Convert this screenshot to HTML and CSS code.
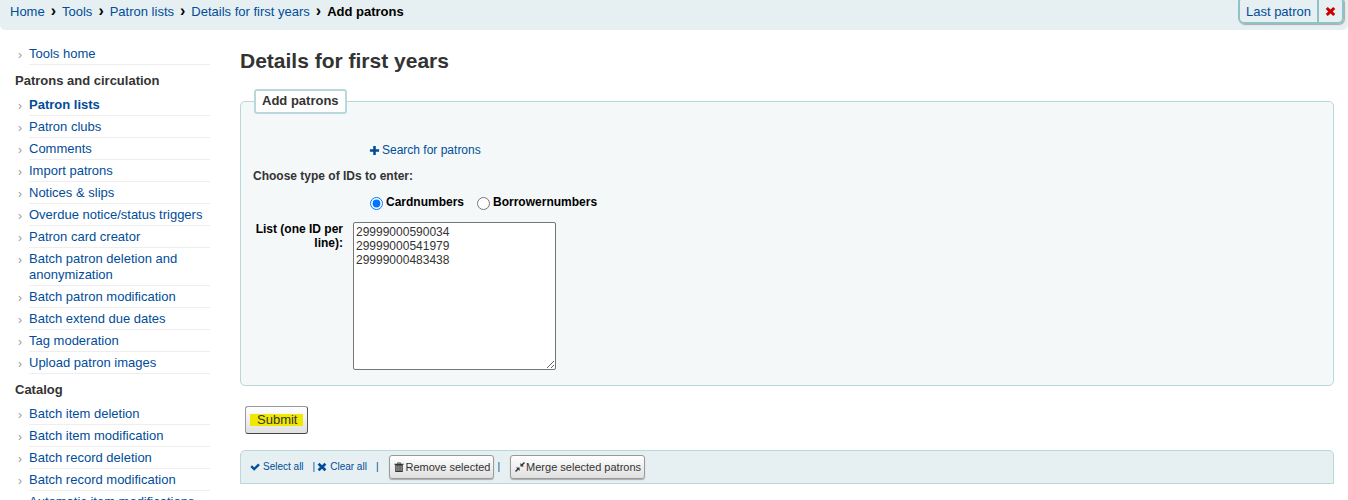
FILE: index.html
```
<!DOCTYPE html>
<html lang="en">
<head>
    <meta charset="UTF-8">
    <meta name="viewport" content="width=device-width, initial-scale=1.0">
    <title>Add patrons</title>
    <link rel="stylesheet" href="styles.css">
</head>
<body>
    <nav id="breadcrumbs">
        <ol>
            <li><a href="#">Home</a></li>
            <li><a href="#">Tools</a></li>
            <li><a href="#">Patron lists</a></li>
            <li><a href="#">Details for first years</a></li>
            <li class="current">Add patrons</li>
        </ol>
        <div class="last-patron">
            <a href="#">Last patron</a>
            <a href="#" class="remove" aria-label="Remove last patron">
                <svg class="icon" viewBox="0 0 12 12"><path d="M3 1 6 3.800 9 1l2.200 2.200L8.400 6l2.800 2.800L9 11 6 8.200 3 11 .8 8.800 3.600 6 .8 3.200z"/></svg>
            </a>
        </div>
    </nav>

    <div class="container">
        <aside id="navmenu">
            <ul>
                <li><a href="#">Tools home</a></li>
            </ul>
            <h5>Patrons and circulation</h5>
            <ul>
                <li><a href="#" class="current">Patron lists</a></li>
                <li><a href="#">Patron clubs</a></li>
                <li><a href="#">Comments</a></li>
                <li><a href="#">Import patrons</a></li>
                <li><a href="#">Notices &amp; slips</a></li>
                <li><a href="#">Overdue notice/status triggers</a></li>
                <li><a href="#">Patron card creator</a></li>
                <li><a href="#">Batch patron deletion and anonymization</a></li>
                <li><a href="#">Batch patron modification</a></li>
                <li><a href="#">Batch extend due dates</a></li>
                <li><a href="#">Tag moderation</a></li>
                <li><a href="#">Upload patron images</a></li>
            </ul>
            <h5>Catalog</h5>
            <ul>
                <li><a href="#">Batch item deletion</a></li>
                <li><a href="#">Batch item modification</a></li>
                <li><a href="#">Batch record deletion</a></li>
                <li><a href="#">Batch record modification</a></li>
                <li><a href="#">Automatic item modifications</a></li>
            </ul>
        </aside>

        <main>
            <h1>Details for first years</h1>

            <form id="add-patrons">
                <fieldset>
                    <legend>Add patrons</legend>
                    <a href="#" class="search">
                        <svg class="icon" viewBox="0 0 12 12"><path d="M4.600 1h2.800v3.600H11v2.800H7.400V11H4.600V7.400H1V4.600h3.600z"/></svg>
                        Search for patrons
                    </a>
                    <p>Choose type of IDs to enter:</p>
                    <div class="id-type">
                        <input type="radio" id="cardnumbers" name="id_type" checked>
                        <label for="cardnumbers">Cardnumbers</label>
                        <input type="radio" id="borrowernumbers" name="id_type">
                        <label for="borrowernumbers">Borrowernumbers</label>
                    </div>
                    <div class="id-list">
                        <label for="patrons">List (one ID per line):</label>
                        <textarea id="patrons" name="patrons">29999000590034
29999000541979
29999000483438</textarea>
                    </div>
                </fieldset>
                <button type="button" class="submit"><mark>Submit</mark></button>
            </form>

            <div class="table-controls">
                <a href="#">
                    <svg class="icon" viewBox="0 0 12 12"><path d="M.5 6 2.500 4 5 6.500 9.800 1.800l2 2L5 10.500z"/></svg>
                    Select all
                </a>
                <span class="sep">|</span>
                <a href="#">
                    <svg class="icon" viewBox="0 0 12 12"><path d="M3 1 6 3.800 9 1l2.200 2.200L8.400 6l2.800 2.800L9 11 6 8.200 3 11 .8 8.800 3.600 6 .8 3.200z"/></svg>
                    Clear all
                </a>
                <span class="sep last">|</span>
                <button type="button">
                    <svg class="icon" viewBox="0 0 12 12"><path fill-rule="evenodd" d="M4 2V.5h4V2h3.500v1.300h-1V12h-9V3.300h-1V2zM5 2h2v-.6H5zM3.100 4.300v6.400H4V4.300zM5.500 4.300v6.400h.9V4.300zM8 4.300v6.400h.9V4.300z"/></svg>
                    Remove selected
                </button>
                <span class="sep">|</span>
                <button type="button">
                    <svg class="icon" viewBox="0 0 12 12"><path d="M6.500 5.500V1.200L8 2.700 10.700 0 12 1.300 9.300 4l1.500 1.500zM5.500 6.500v4.300L4 9.300 1.300 12 0 10.700 2.700 8 1.200 6.500z"/></svg>
                    Merge selected patrons
                </button>
            </div>
        </main>
    </div>
</body>
</html>
```

FILE: styles.css
```
* {
    box-sizing: border-box;
}
body {
    margin: 0;
    background-color: #fff;
    color: #333;
    font-family: "Liberation Sans", Arial, sans-serif;
    font-size: 13px;
    line-height: 16px;
}
a {
    color: #004d99;
    text-decoration: none;
}
ul, ol {
    list-style: none;
    margin: 0;
    padding: 0;
}
.icon {
    width: 11px;
    height: 11px;
    fill: currentColor;
}

/* Breadcrumbs */
#breadcrumbs {
    display: flex;
    justify-content: space-between;
    height: 30px;
    padding: 0 4px 0 10px;
    background-color: #e6eff1;
    border-radius: 0 0 5px 5px;
}
#breadcrumbs ol {
    display: flex;
    padding-top: 4px;
}
#breadcrumbs li + li::before {
    content: "\203A";
    margin: 0 6px;
    color: #000;
    font-size: 16px;
    font-weight: bold;
    line-height: 12px;
}
#breadcrumbs .current {
    color: #000;
    font-weight: bold;
}
.last-patron {
    display: flex;
    height: 28px;
    margin-top: -4px;
    border: 2px solid #90c1c8;
    border-radius: 6px;
    box-shadow: 1px 1px 1px #aaa;
}
.last-patron a {
    padding: 6px 6px 0;
}
.last-patron .remove {
    border-left: 2px solid #90c1c8;
    padding-top: 7px;
    color: #c00;
}

/* Layout */
.container {
    display: flex;
    gap: 30px;
    padding: 0 14px 0 15px;
}
main {
    flex: 1;
    min-width: 0;
}

/* Left menu */
#navmenu {
    flex: 0 0 195px;
    padding-top: 13px;
}
#navmenu h5 {
    margin: 8px 0 5px;
    font-size: 13px;
}
#navmenu ul {
    padding-left: 14px;
}
#navmenu li {
    position: relative;
    padding: 3px 0 2px;
    border-bottom: 1px solid #eee;
}
#navmenu li::before {
    content: "\203A";
    position: absolute;
    left: -11px;
    top: 4px;
    color: #999;
    font-size: 12px;
}
#navmenu .current {
    font-weight: bold;
}

/* Form */
h1 {
    margin: 20px 0 17px;
    font-size: 21px;
    line-height: 22px;
}
fieldset {
    margin: 0;
    padding: 29px 12px 15px;
    border: 1px solid #b9d8d9;
    border-radius: 5px;
    background-color: #f4f8f9;
    font-size: 12px;
    line-height: 14px;
}
legend {
    margin-left: 1px;
    padding: 2px 6px 3px;
    border: 2px solid #b9d8d9;
    border-radius: 3px;
    background-color: #fff;
    font-size: 13px;
    font-weight: bold;
    line-height: 16px;
}
.search {
    display: flex;
    align-items: center;
    gap: 2px;
    margin-left: 116px;
}
fieldset p {
    margin: 12px 0;
    font-weight: bold;
}
.id-type {
    display: flex;
    margin-left: 117px;
    color: #000;
    font-weight: bold;
}
.id-type input {
    width: 13px;
    height: 13px;
    margin: 2px 3px 0 0;
}
.id-type label {
    margin-right: 13px;
}
.id-list {
    display: flex;
    gap: 10px;
    margin-top: 12px;
}
.id-list label {
    width: 90px;
    color: #000;
    font-weight: bold;
    text-align: right;
}
textarea {
    width: 203px;
    height: 148px;
    padding: 2px;
    border: 1px solid #767676;
    border-radius: 2px;
    color: #333;
    font: 12px/14px "Liberation Sans", Arial, sans-serif;
}

/* Buttons */
button {
    border: 1px solid #999;
    border-radius: 3px;
    background: linear-gradient(#fff, #e0e0e0);
    color: #333;
    font-family: inherit;
    white-space: nowrap;
}
.submit {
    display: block;
    height: 28px;
    margin: 20px 0 16px 5px;
    padding: 0 4px;
    border-color: #999 #555 #444 #999;
    font-size: 13px;
}
mark {
    display: block;
    padding: 0 6px 0 7px;
    background-color: #f0e800;
    color: #333;
    line-height: 12px;
}

/* Toolbar */
.table-controls {
    display: flex;
    align-items: center;
    height: 34px;
    padding-left: 9px;
    border: 1px solid #b9d8d9;
    border-radius: 5px 5px 0 0;
    background-color: #e6eff1;
    font-size: 10px;
}
.table-controls a, .table-controls button {
    display: flex;
    align-items: center;
    gap: 3px;
}
.table-controls .icon {
    width: 10px;
    height: 10px;
}
.table-controls button {
    height: 24px;
    padding: 0 3px 0 4px;
    font-size: 11px;
    gap: 1px;
    box-shadow: 0 1px 1px #aaa;
}
.sep {
    margin-left: 9px;
    margin-right: 2px;
    color: #004d99;
}
.sep.last {
    margin-right: 11px;
}
button + .sep {
    margin-left: 3px;
    margin-right: 10px;
}
```
